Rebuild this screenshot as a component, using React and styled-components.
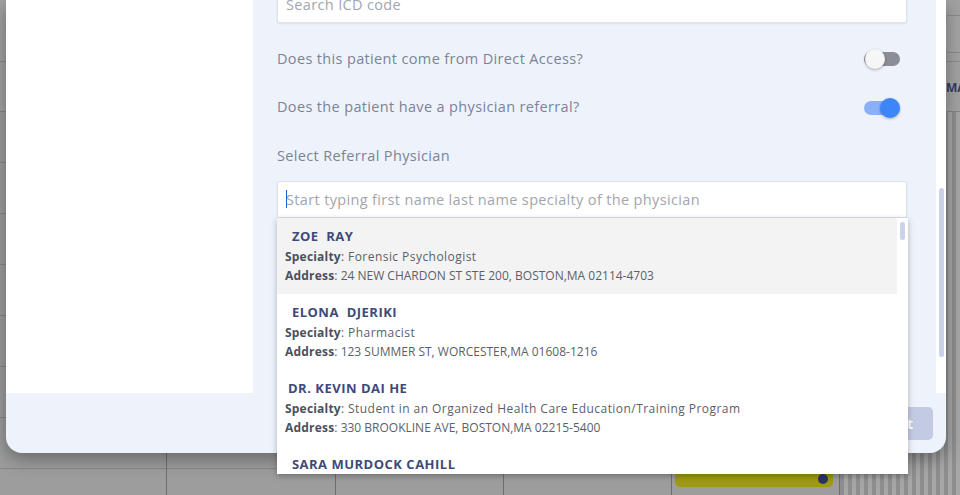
import React from "react";
import styled, { createGlobalStyle } from "styled-components";

const GlobalStyle = createGlobalStyle`
  html, body { margin: 0; padding: 0; }
  body {
    width: 960px;
    height: 495px;
    overflow: hidden;
    font-family: "Open Sans", "Noto Sans", sans-serif;
  }
`;

const Screen = styled.div`
  position: relative;
  width: 960px;
  height: 495px;
  overflow: hidden;
  background: #9d9d9d;
`;

/* ---------- dimmed calendar page behind the dialog ---------- */
const Backdrop = styled.div`
  display: flex;
  flex-direction: column;
  width: 100%;
  height: 100%;
`;

const PageHeader = styled.div`
  height: 111px;
  flex-shrink: 0;
  display: flex;
  flex-direction: column;
  align-items: flex-end;
  border-bottom: 1px solid #858585;
  background:
    linear-gradient(to bottom, transparent 61px, #8b8b8b 61px, #8b8b8b 62px, transparent 62px),
    #a2a2a2;
`;

const HeaderButton = styled.div`
  margin-top: 15px;
  width: 60px;
  height: 36px;
  margin-right: -45px;
  border: 1px solid #8a8a8a;
  border-radius: 6px;
  background: #a4a4a4;
`;

const HeaderLabel = styled.div`
  margin-top: 26px;
  width: 14px;
  overflow: hidden;
  white-space: nowrap;
  font: 700 12px "Open Sans", sans-serif;
  color: #2f3a66;
`;

const Grid = styled.div`
  flex: 1;
  display: grid;
  grid-template-columns: 167px 169px 168px 168px 168px 1fr;
`;

const Column = styled.div`
  display: flex;
  flex-direction: column;
  border-right: ${(p) => (p.$last ? "none" : "1px solid #6f6f6f")};
  background: ${(p) =>
    p.$striped
      ? "repeating-linear-gradient(to right, #8e8e8e 0 4px, #a6a6a6 4px 8px)"
      : "repeating-linear-gradient(to bottom, transparent 0 50px, #888 50px 51px), #9d9d9d"};
`;

const CalEvent = styled.div`
  margin: 358px 6px 0 3px;
  height: 17px;
  border-radius: 5px;
  background: #9e9a12;
  display: flex;
  align-items: center;
  justify-content: flex-end;
  padding-right: 5px;
`;

const EventDot = styled.span`
  width: 10px;
  height: 10px;
  border-radius: 50%;
  background: #2b3466;
`;

/* ---------- dialog ---------- */
const Dialog = styled.div`
  position: absolute;
  left: 6px;
  top: 0;
  width: 940px;
  height: 453px;
  display: flex;
  flex-direction: column;
  background: #eef3fb;
  border-radius: 0 0 16px 16px;
  box-shadow: 0 6px 18px rgba(0, 0, 0, 0.35);
`;

const DialogBody = styled.div`
  height: 393px;
  display: flex;
`;

const SidePanel = styled.div`
  width: 247px;
  background: #ffffff;
`;

const Form = styled.div`
  flex: 1;
  padding: 0 29px 0 24px;
  display: flex;
  flex-direction: column;
`;

const ScrollTrack = styled.div`
  width: 10px;
  background: #ffffff;
  display: flex;
  justify-content: center;
`;

const ScrollThumb = styled.div`
  margin-top: ${(p) => p.$top}px;
  width: 5px;
  height: ${(p) => p.$height}px;
  border-radius: 3px;
  background: #cbd3e8;
`;

const TextBox = styled.div`
  height: 37px;
  flex-shrink: 0;
  box-sizing: border-box;
  margin-top: ${(p) => p.$mt || 0}px;
  background: #ffffff;
  border: 1px solid #dde1e8;
  border-radius: 2px;
  box-shadow: 0 1px 2px rgba(0, 0, 0, 0.08);
  display: flex;
  align-items: center;
  padding-left: 8px;
  position: relative;
`;

const Caret = styled.span`
  width: 1px;
  height: 18px;
  background: #1a5fd8;
  margin-right: -1px;
`;

const Placeholder = styled.span`
  font-family: "Open Sans", sans-serif;
  font-size: 14.5px;
  letter-spacing: 0.35px;
  color: #a2a6ad;
`;

const Row = styled.div`
  height: 48.5px;
  flex-shrink: 0;
  display: flex;
  align-items: center;
  justify-content: space-between;
  padding-right: 7px;
  margin-top: ${(p) => p.$mt || 0}px;
`;

const Label = styled.span`
  font-family: "Open Sans", sans-serif;
  font-size: 14.5px;
  letter-spacing: 0.35px;
  font-weight: 500;
  color: #7a8399;
`;

const Track = styled.div`
  width: 36px;
  height: 14px;
  margin-top: 2px;
  border-radius: 7px;
  display: flex;
  align-items: center;
  justify-content: ${(p) => (p.$on ? "flex-end" : "flex-start")};
  background: ${(p) => (p.$on ? "#8ab0fa" : "#8b8e94")};
`;

const Knob = styled.span`
  width: 20px;
  height: 20px;
  flex-shrink: 0;
  border-radius: 50%;
  margin-left: ${(p) => (p.$on ? 0 : 1)}px;
  background: ${(p) => (p.$on ? "#3d86f9" : "#f6f6f6")};
  box-shadow: 0 1px 3px rgba(0, 0, 0, 0.3);
`;

const Toggle = ({ on }) => (
  <Track $on={on}>
    <Knob $on={on} />
  </Track>
);

const Menu = styled.div`
  position: absolute;
  left: -1px;
  top: 36px;
  width: 631px;
  height: 256px;
  background: #ffffff;
  box-shadow: 0 2px 6px rgba(0, 0, 0, 0.28);
  display: flex;
  overflow: hidden;
  z-index: 5;
`;

const MenuList = styled.div`
  flex: 1;
  display: flex;
  flex-direction: column;
`;

const MenuScroll = styled.div`
  width: 11px;
  display: flex;
  justify-content: center;
`;

const Option = styled.div`
  height: 76px;
  flex-shrink: 0;
  box-sizing: border-box;
  padding: 8px 0 0 8px;
  background: ${(p) => (p.$active ? "#f3f3f3" : "#ffffff")};
`;

const Name = styled.div`
  height: 21px;
  line-height: 20px;
  padding-left: 3px;
  white-space: pre;
  font-family: "Open Sans", sans-serif;
  font-size: 13px;
  font-weight: 700;
  letter-spacing: 0.5px;
  color: #3e4a78;
`;

const InfoLine = styled.div`
  height: 19.5px;
  line-height: 19.5px;
  font-family: "Open Sans", sans-serif;
  font-size: 12px;
  color: #5b5f6a;
  white-space: nowrap;
`;

const InfoKey = styled.b`
  font-weight: 700;
  letter-spacing: 0.2px;
  color: #4c505c;
`;

const InfoValue = styled.span`
  letter-spacing: ${(p) => (p.$caps ? "0px" : "0.45px")};
`;

const Footer = styled.div`
  flex: 1;
  display: flex;
  align-items: center;
  justify-content: flex-end;
  padding-right: 13px;
`;

const SubmitButton = styled.div`
  height: 33px;
  padding: 0 20px;
  border-radius: 5px;
  background: #c3cbe4;
  color: #ffffff;
  font: 700 14px "Open Sans", sans-serif;
  display: flex;
  align-items: center;
`;

const physicians = [
  {
    name: " ZOE  RAY",
    specialty: "Forensic Psychologist",
    address: "24 NEW CHARDON ST STE 200, BOSTON,MA 02114-4703",
    active: true,
  },
  {
    name: " ELONA  DJERIKI",
    specialty: "Pharmacist",
    address: "123 SUMMER ST, WORCESTER,MA 01608-1216",
  },
  {
    name: "DR. KEVIN DAI HE",
    specialty: "Student in an Organized Health Care Education/Training Program",
    address: "330 BROOKLINE AVE, BOSTON,MA 02215-5400",
  },
  {
    name: " SARA MURDOCK CAHILL",
    specialty: "Physical Therapist",
    address: "1 BOWDOIN SQ, BOSTON,MA 02114-2919",
  },
];

export default function App() {
  return (
    <>
      <GlobalStyle />
      <Screen>
        <Backdrop>
          <PageHeader>
            <HeaderButton />
            <HeaderLabel>MAY</HeaderLabel>
          </PageHeader>
          <Grid>
            <Column />
            <Column />
            <Column />
            <Column />
            <Column>
              <CalEvent>
                <EventDot />
              </CalEvent>
            </Column>
            <Column $striped $last />
          </Grid>
        </Backdrop>

        <Dialog>
          <DialogBody>
            <SidePanel />
            <Form>
              <TextBox $mt={-14}>
                <Placeholder>Search ICD code</Placeholder>
              </TextBox>
              <Row $mt={11}>
                <Label>Does this patient come from Direct Access?</Label>
                <Toggle on={false} />
              </Row>
              <Row>
                <Label>Does the patient have a physician referral?</Label>
                <Toggle on />
              </Row>
              <Row>
                <Label>Select Referral Physician</Label>
              </Row>
              <TextBox $mt={1}>
                <Caret />
                <Placeholder>
                  Start typing first name last name specialty of the physician
                </Placeholder>
                <Menu>
                  <MenuList>
                    {physicians.map((p) => (
                      <Option key={p.name} $active={p.active}>
                        <Name>{p.name}</Name>
                        <InfoLine>
                          <InfoKey>Specialty</InfoKey>
                          <InfoValue>: {p.specialty}</InfoValue>
                        </InfoLine>
                        <InfoLine>
                          <InfoKey>Address</InfoKey>
                          <InfoValue $caps>: {p.address}</InfoValue>
                        </InfoLine>
                      </Option>
                    ))}
                  </MenuList>
                  <MenuScroll>
                    <ScrollThumb $top={4} $height={18} />
                  </MenuScroll>
                </Menu>
              </TextBox>
            </Form>
            <ScrollTrack>
              <ScrollThumb $top={188} $height={169} />
            </ScrollTrack>
          </DialogBody>
          <Footer>
            <SubmitButton>Submit</SubmitButton>
          </Footer>
        </Dialog>
      </Screen>
    </>
  );
}
